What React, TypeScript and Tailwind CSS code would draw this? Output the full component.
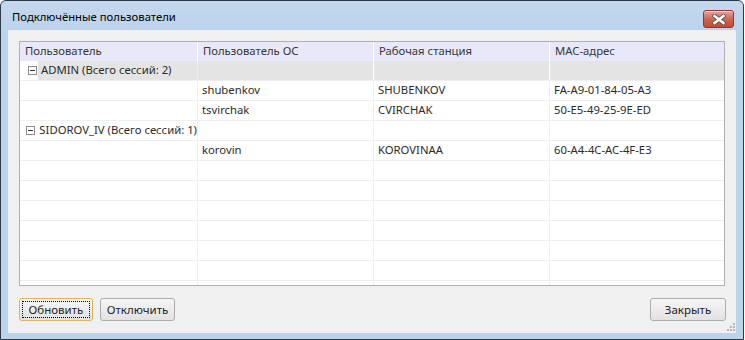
import React from "react";

type Row = {
  group?: string;
  user?: string;
  station?: string;
  mac?: string;
  selected?: boolean;
};

const rows: Row[] = [
  { group: "ADMIN (Всего сессий: 2)", selected: true },
  { user: "shubenkov", station: "SHUBENKOV", mac: "FA-A9-01-84-05-A3" },
  { user: "tsvirchak", station: "CVIRCHAK", mac: "50-E5-49-25-9E-ED" },
  { group: "SIDOROV_IV (Всего сессий: 1)" },
  { user: "korovin", station: "KOROVINAA", mac: "60-A4-4C-AC-4F-E3" },
  {}, {}, {}, {}, {}, {}, {},
];

const columns = ["Пользователь", "Пользователь ОС", "Рабочая станция", "MAC-адрес"];

function MinusBox() {
  return (
    <span className="flex h-[9px] w-[9px] items-center justify-center border border-[#8c8c8c] bg-white">
      <span className="h-px w-[5px] bg-[#333]" />
    </span>
  );
}

function CloseButton() {
  return (
    <div className="flex h-[18px] w-[31px] items-center justify-center rounded-[3px] border border-[#8e3a2d] bg-gradient-to-b from-[#e6a595] via-[#cf6651] to-[#c24a33] shadow-[inset_0_1px_0_rgba(255,255,255,0.5)]">
      <svg width="14" height="11" viewBox="0 0 14 11">
        <path d="M2.5 2 L11.5 9 M11.5 2 L2.5 9" stroke="#5a5a5a" strokeWidth="4.2" strokeLinecap="square" />
        <path d="M2.5 2 L11.5 9 M11.5 2 L2.5 9" stroke="#ffffff" strokeWidth="2.4" strokeLinecap="square" />
      </svg>
    </div>
  );
}

function Button({ label, focused, width }: { label: string; focused?: boolean; width: string }) {
  return (
    <button
      className={
        "relative flex h-[23px] items-center justify-center rounded-[3px] border bg-gradient-to-b from-[#f6f6f6] to-[#e2e2e2] text-[11.5px] text-[#1e1e1e] " +
        width +
        (focused ? " border-[#e3b15f]" : " border-[#acacac]")
      }
    >
      {focused && <span className="absolute inset-[2px] border border-dotted border-black" />}
      {label}
    </button>
  );
}

const widths = ["w-[178px]", "w-[176px]", "w-[176px]", "flex-1"];

export default function App() {
  return (
    <div className="h-[340px] w-[745px] bg-white" style={{ fontFamily: '"Noto Sans", "Open Sans", sans-serif' }}>
      <div className="relative flex h-[340px] w-[744px] flex-col rounded-t-[6px] border border-[#2c3a48] bg-[#bcd3ec]">
        {/* title bar */}
        <div className="flex h-[29px] items-start justify-between rounded-t-[6px] bg-gradient-to-b from-[#c4d8ee] to-[#bdd3ec] pl-[11px] pr-[9px]">
          <span className="mt-[9px] text-[11.3px] leading-[14px] text-black">Подключённые пользователи</span>
          <div className="mt-[9px]">
            <CloseButton />
          </div>
        </div>

        {/* client area */}
        <div className="mx-[7px] mb-[6px] flex flex-1 flex-col bg-[#f0f0f0] px-[11px] pt-[11px] pb-[11px]">
          <div className="h-[245px] overflow-hidden whitespace-nowrap border border-[#b0b0b0] bg-white text-[11.3px] text-[#2b2b2b]">
            <div className="flex h-[19px] bg-[#e8e8f9]">
              {columns.map((c, i) => (
                <div
                  key={c}
                  className={
                    "flex items-center pl-[5px] text-[#363636] " +
                    widths[i] +
                    (i < 3 ? " border-r border-white" : "")
                  }
                >
                  {c}
                </div>
              ))}
            </div>
            {rows.map((r, idx) => (
              <div key={idx} className="flex h-[20px] border-b border-[#efefef]">
                {r.group ? (
                  <>
                    <div className="flex w-[178px] border-r border-[#efefef]">
                      <div className="flex w-[18px] items-center justify-end bg-white pr-[1px]">
                        <MinusBox />
                      </div>
                      <div className={"flex flex-1 items-center pl-[3px] " + (r.selected ? "bg-[#e4e4e4]" : "")}>
                        {r.group}
                      </div>
                    </div>
                    <div className={"w-[176px] border-r " + (r.selected ? "border-white bg-[#e4e4e4]" : "border-[#efefef]")} />
                    <div className={"w-[176px] border-r " + (r.selected ? "border-white bg-[#e4e4e4]" : "border-[#efefef]")} />
                    <div className={"flex-1 " + (r.selected ? "bg-[#e4e4e4]" : "")} />
                  </>
                ) : (
                  <>
                    <div className="w-[178px] border-r border-[#efefef]" />
                    <div className="flex w-[176px] items-center border-r border-[#efefef] pl-[4px]">{r.user}</div>
                    <div className="flex w-[176px] items-center border-r border-[#efefef] pl-[4px]">{r.station}</div>
                    <div className="flex flex-1 items-center pl-[4px]">{r.mac}</div>
                  </>
                )}
              </div>
            ))}
          </div>

          <div className="mt-[12px] flex items-center">
            <Button label="Обновить" focused width="w-[74px]" />
            <div className="ml-[7px]">
              <Button label="Отключить" width="w-[75px]" />
            </div>
            <div className="ml-auto mr-[-1px]">
              <Button label="Закрыть" width="w-[76px]" />
            </div>
          </div>
        </div>

        {/* resize grip */}
        <svg className="absolute bottom-[8px] right-[8px]" width="8" height="8" viewBox="0 0 8 8">
          {[
            [6, 0], [6, 3], [3, 3], [6, 6], [3, 6], [0, 6],
          ].map(([x, y], i) => (
            <rect key={i} x={x} y={y} width="2" height="2" fill="#b5b5b5" />
          ))}
        </svg>
      </div>
    </div>
  );
}
